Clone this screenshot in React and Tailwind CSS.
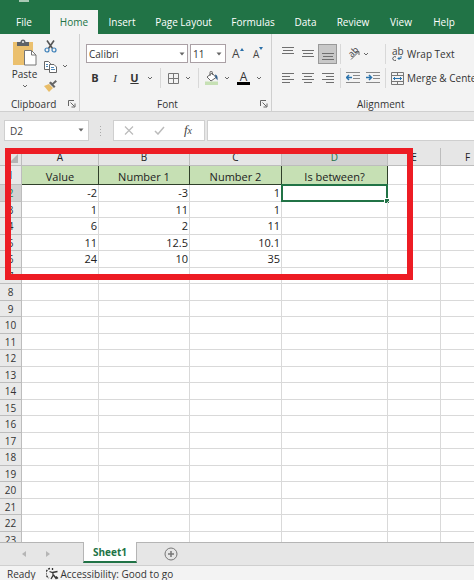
import React from 'react';

const TABS = [
  ['File', 'w-[48px]'],
  ['Home', 'ml-[2px] w-[48px] bg-[#f3f3f3] text-[#217346]'],
  ['Insert', 'w-[48px]'],
  ['Page Layout', 'w-[75px]'],
  ['Formulas', 'w-[64px]'],
  ['Data', 'w-[41px]'],
  ['Review', 'w-[54px]'],
  ['View', 'w-[42px]'],
  ['Help', 'w-[44px]'],
];

const COLUMNS = ['A', 'B', 'C', 'D', 'E', 'F'];
const TITLES = ['Value', 'Number 1', 'Number 2', 'Is between?'];
const DATA = [
  ['-2', '-3', '1'],
  ['1', '11', '1'],
  ['6', '2', '11'],
  ['11', '12.5', '10.1'],
  ['24', '10', '35'],
];
const ROWS = Array.from({ length: 22 }, (_, i) => i + 2);

function Chevron() {
  return (
    <svg width="6" height="6" viewBox="0 0 6 6" fill="none" stroke="#666" strokeWidth="1" className="shrink-0">
      <path d="M1 2l2 2 2-2" />
    </svg>
  );
}

function Caret({ className }) {
  return (
    <svg width="6" height="4" viewBox="0 0 6 4" className={className}>
      <path d="M0.500 0.500h5L3 3.500z" fill="#666" />
    </svg>
  );
}

function Launcher() {
  return (
    <button aria-label="More options" className="absolute right-[3px] bottom-[3px]">
      <svg width="8" height="8" viewBox="0 0 8 8" fill="none" stroke="#666" strokeWidth="1">
        <path d="M0.500 6V0.500H6M2.500 2.500l4 4M7 3.500V7H3.500" />
      </svg>
    </button>
  );
}

function Lines({ y, rows, align }) {
  return (
    <svg width="12" height="14" viewBox="0 0 12 14" stroke="#6f6f6f" strokeWidth="1">
      {rows.map((w, i) => {
        const x = align === 'right' ? 12 - w : align === 'center' ? (12 - w) / 2 : 0;
        return <path key={i} d={`M${x} ${y + i * 3}h${w}`} />;
      })}
    </svg>
  );
}

function Indent({ right }) {
  return (
    <svg width="14" height="12" viewBox="0 0 14 12" fill="none" stroke="#888" strokeWidth="1">
      <path d="M0 0.500h14M7 3.500h7M7 6.500h7M0 10.500h14" />
      <path d={right ? 'M0 5.500h5M3 3l2.500 2.500L3 8' : 'M6 5.500H1M3 3L0.500 5.500L3 8'} stroke="#2a73ad" strokeWidth="1.500" />
    </svg>
  );
}

function Tool({ label, className = '', children }) {
  return (
    <button aria-label={label} className={`flex h-[20px] shrink-0 items-center justify-center ${className}`}>
      {children}
    </button>
  );
}

function Divider({ className = '' }) {
  return <span className={`h-[20px] w-px shrink-0 bg-[#d8d8d8] ${className}`} />;
}

function Clipboard() {
  return (
    <section className="relative flex w-[80px] shrink-0 border-r border-[#cfcfcf] pt-[4px] pl-[11px]">
      <button className="flex h-[54px] w-[27px] flex-col items-center leading-[16px]">
        <svg width="25" height="28" viewBox="0 0 25 28" className="shrink-0">
          <path d="M1 4h20v23H1z" fill="#ebc06e" />
          <path d="M5 8V4h3.500a2.500 2.500 0 0 1 5 0H17v4z" fill="#5f6368" />
          <circle cx="11" cy="4" r="1" fill="#f3f3f3" />
          <path d="M12.500 12.500h7l4.500 4.500v10H12.500z" fill="#fff" stroke="#777" />
          <path d="M19.500 12.500V17H24" fill="none" stroke="#777" />
        </svg>
        <span>Paste</span>
        <span className="pt-px"><Chevron /></span>
      </button>
      <div className="ml-[5px] flex flex-col">
        <Tool label="Cut" className="w-[14px] pb-[3px]">
          <svg width="13" height="13" viewBox="0 0 13 13" fill="none">
            <path d="M3 0.500l5.500 8M10 0.500l-5.500 8" stroke="#555" strokeWidth="1.600" />
            <circle cx="3" cy="10" r="2" stroke="#3b7fb8" strokeWidth="1.200" />
            <circle cx="10" cy="10" r="2" stroke="#3b7fb8" strokeWidth="1.200" />
          </svg>
        </Tool>
        <Tool label="Copy" className="w-[14px] pb-[3px]">
          <svg width="13" height="12" viewBox="0 0 13 12" fill="#fff" stroke="#666">
            <path d="M0.500 0.500h4l2 2v6h-6z" />
            <path d="M5.500 3.500H10l2.500 2.500v5.500h-7z" />
            <path d="M2 3.500h2M2 5.500h2M7 6.500h3M7 8.500h4" stroke="#4d88b8" />
          </svg>
        </Tool>
        <Tool label="Format Painter" className="w-[14px] pb-[5px]">
          <svg width="13" height="12" viewBox="0 0 13 12">
            <path d="M0 6l5-2 4 4-4 4z" fill="#e9bd68" />
            <path d="M5 3l5 5 1.500-1.500L9.500 4.500 13 1.500 11.500 0 8.500 3 6.500 1.500z" fill="#666" />
          </svg>
        </Tool>
      </div>
      <button aria-label="Copy options" className="ml-[5px] flex h-[56px] items-center"><Chevron /></button>
      <h2 className="absolute bottom-0 left-[11px] leading-[14px]">Clipboard</h2>
      <Launcher />
    </section>
  );
}

function FontGroup() {
  return (
    <section className="relative w-[192px] shrink-0 border-r border-[#cfcfcf] pt-[10px] pl-[6px]">
      <div className="flex h-[19px] items-center">
        <label className="relative block">
          <select aria-label="Font" className="block h-[19px] w-[102px] appearance-none border border-[#aaa0a5] bg-white pl-[2px] text-[10px] leading-[16px]">
            <option>Calibri</option>
          </select>
          <Caret className="pointer-events-none absolute top-[8px] right-[3px]" />
        </label>
        <label className="relative ml-[2px] block">
          <select aria-label="Font size" className="block h-[19px] w-[36px] appearance-none border border-[#aaa0a5] bg-white pl-[2px] text-[10px] leading-[16px]">
            <option>11</option>
          </select>
          <Caret className="pointer-events-none absolute top-[8px] right-[4px]" />
        </label>
        <button className="ml-[6px] flex w-[12px] text-[12px] leading-[18px] text-[#444]">
          A
          <svg width="4" height="3" viewBox="0 0 4 3" className="mt-[3px] shrink-0"><path d="M0 3l2-3 2 3z" fill="#2a6fa8" /></svg>
        </button>
        <button className="ml-[9px] flex w-[12px] text-[10px] leading-[20px] text-[#444]">
          A
          <svg width="4" height="3" viewBox="0 0 4 3" className="mt-[3px] shrink-0"><path d="M0 0l2 3 2-3z" fill="#2a6fa8" /></svg>
        </button>
      </div>
      <div className="mt-[5px] flex h-[20px] items-center text-[11px] text-[#333]">
        <Tool label="Bold" className="w-[18px] font-bold">B</Tool>
        <Tool label="Italic" className="w-[22px] font-[Liberation_Serif,serif] italic">I</Tool>
        <Tool label="Underline" className="w-[17px] font-bold underline">U</Tool>
        <Tool label="Underline style" className="w-[14px]"><Chevron /></Tool>
        <Divider className="ml-[3px]" />
        <Tool label="Borders" className="ml-[5px] w-[14px]">
          <svg width="11" height="11" viewBox="0 0 11 11" fill="none" stroke="#777"><path d="M0.500 0.500h10v10h-10zM5.500 0v11M0 5.500h11" /></svg>
        </Tool>
        <Tool label="Border style" className="ml-[1px] w-[14px]"><Chevron /></Tool>
        <Divider className="ml-[3px]" />
        <Tool label="Fill color" className="ml-[6px] w-[14px]">
          <svg width="14" height="14" viewBox="0 0 14 14" fill="none">
            <path d="M0 10.500h13V14H0z" fill="#c6e0b4" />
            <path d="M2 6l5-4 4 4.500L6 10z" fill="#fff" stroke="#666" />
            <path d="M5 5V1.500a1.200 1.200 0 0 1 2.400 0V4" stroke="#666" />
            <path d="M10 3.500c2 0 3 2 2.500 6l-2-3z" fill="#2f5d8a" />
          </svg>
        </Tool>
        <Tool label="Fill color options" className="w-[16px]"><Chevron /></Tool>
        <button aria-label="Font color" className="ml-[1px] flex w-[15px] flex-col items-center text-[12px] leading-[10px] font-medium">
          <span className="h-[10px]">A</span>
          <span className="h-[3px] w-[13px] bg-black" />
        </button>
        <Tool label="Font color options" className="w-[15px]"><Chevron /></Tool>
      </div>
      <h2 className="absolute inset-x-0 bottom-0 pr-[16px] text-center leading-[14px]">Font</h2>
      <Launcher />
    </section>
  );
}

function Alignment() {
  return (
    <section className="relative min-w-0 flex-1 overflow-hidden pt-[10px] pl-[7px]">
      <div className="flex h-[20px] items-center">
        <Tool label="Top align" className="w-[18px]"><Lines y={0.5} rows={[12, 10, 12]} align="center" /></Tool>
        <Tool label="Middle align" className="ml-[2px] w-[18px]"><Lines y={3.5} rows={[12, 10, 12]} align="center" /></Tool>
        <Tool label="Bottom align" className="ml-[1px] w-[19px] border border-[#999] bg-[#c8c8c8]"><Lines y={6.5} rows={[12, 10, 12]} align="center" /></Tool>
        <Divider className="ml-[3px]" />
        <Tool label="Orientation" className="relative ml-[5px] w-[14px]">
          <span className="-mt-[5px] -rotate-45 text-[9px] leading-[10px] text-[#444]">ab</span>
          <svg width="14" height="14" viewBox="0 0 14 14" fill="none" stroke="#666" className="absolute top-[3px] left-0">
            <path d="M5 12.500l7.500-7.500M9.500 4.500h3.500V8" />
          </svg>
        </Tool>
        <Tool label="Orientation options" className="w-[12px]"><Chevron /></Tool>
        <Divider className="ml-[13px]" />
        <button className="ml-[6px] flex items-center whitespace-nowrap">
          <span className="mr-[4px] flex w-[11px] flex-col items-start leading-[9px] text-[#444]">
            ab
            <svg width="10" height="5" viewBox="0 0 10 5" fill="none" stroke="#555">
              <path d="M4 1a2 2 0 1 0 0 3.200" />
              <path d="M9 0v2.500H6M7.500 1L6 2.500 7.500 4" stroke="#2a73ad" />
            </svg>
          </span>
          Wrap Text
        </button>
      </div>
      <div className="mt-[4px] flex h-[20px] items-center">
        <Tool label="Align left" className="w-[18px]"><Lines y={2.5} rows={[12, 8, 12, 8]} /></Tool>
        <Tool label="Align center" className="ml-[2px] w-[18px]"><Lines y={2.5} rows={[12, 8, 12, 8]} align="center" /></Tool>
        <Tool label="Align right" className="ml-[2px] w-[18px]"><Lines y={2.5} rows={[12, 8, 12, 8]} align="right" /></Tool>
        <Divider className="ml-[3px]" />
        <Tool label="Decrease indent" className="ml-[5px] w-[14px]"><Indent /></Tool>
        <Tool label="Increase indent" className="ml-[6px] w-[14px]"><Indent right /></Tool>
        <Divider className="ml-[5px]" />
        <button className="ml-[5px] flex items-center whitespace-nowrap">
          <svg width="13" height="13" viewBox="0 0 13 13" fill="none" stroke="#777" className="mr-[3px] shrink-0">
            <path d="M0.500 0.500h12v12h-12zM0 3.500h13M0 9.500h13M6.500 0v3.500M6.500 9.500V13" />
            <path d="M2 6.500h9M4 5L2.500 6.500 4 8M9 5l1.500 1.500L9 8" stroke="#2a73ad" />
          </svg>
          Merge &amp; Center
        </button>
      </div>
      <h2 className="absolute bottom-0 left-[85px] leading-[14px]">Alignment</h2>
    </section>
  );
}

function FormulaBar() {
  return (
    <div className="flex h-[36px] shrink-0 items-start pt-[8px] pl-[4px]">
      <div className="relative">
        <input aria-label="Name box" defaultValue="D2" className="block h-[21px] w-[85px] border border-[#cfcfcf] bg-white pl-[5px] text-[10px] text-[#444]" />
        <Caret className="pointer-events-none absolute top-[8px] right-[5px]" />
      </div>
      <svg width="3" height="10" viewBox="0 0 3 10" className="mt-[6px] ml-[10px] shrink-0" fill="#aaa">
        <path d="M1 0h1v1H1zM1 3h1v1H1zM1 6h1v1H1zM1 9h1v1H1z" />
      </svg>
      <div className="ml-[11px] flex h-[21px] w-[92px] shrink-0 items-center border border-[#cfcfcf] bg-white">
        <Tool label="Cancel" className="w-[30px]">
          <svg width="10" height="9" viewBox="0 0 10 9" stroke="#bbb" strokeWidth="1.200"><path d="M1 0.500l8 8M9 0.500l-8 8" /></svg>
        </Tool>
        <Tool label="Enter" className="w-[30px]">
          <svg width="11" height="9" viewBox="0 0 11 9" fill="none" stroke="#bbb" strokeWidth="1.500"><path d="M1 5l3 3 6-7" /></svg>
        </Tool>
        <button aria-label="Insert function" className="w-[28px] font-[Liberation_Serif,serif] text-[13px] leading-[18px] text-[#444] italic">
          f<span className="text-[10px]">x</span>
        </button>
      </div>
      <input aria-label="Formula" className="ml-[2px] block h-[21px] min-w-0 flex-1 border border-r-0 border-[#cfcfcf] bg-white" />
    </div>
  );
}

function Sheet() {
  const head = 'border-r border-b border-[#bdbdbd] p-0 font-normal';
  return (
    <div className="relative min-h-0 flex-1 overflow-hidden bg-white">
      <table className="w-full table-fixed border-separate border-spacing-0 text-[11px] leading-[15px] font-medium text-[#222]">
        <colgroup>
          <col className="w-[22px]" />
          <col className="w-[77px]" />
          <col className="w-[91px]" />
          <col className="w-[92px]" />
          <col className="w-[106px]" />
          <col className="w-[53px]" />
          <col />
        </colgroup>
        <thead>
          <tr className="h-[18px] bg-[#e6e6e6] text-[10px] leading-[15px]">
            <th className={`${head} align-bottom`}>
              <svg width="9" height="9" viewBox="0 0 9 9" className="mb-[2px] ml-[9px] block"><path d="M9 0v9H0z" fill="#b4b4b4" /></svg>
            </th>
            {COLUMNS.map((c) => (
              <th key={c} scope="col" className={`${head} pt-[2px] ${c === 'D' ? 'bg-[#d2d2d2] text-[#217346]' : ''} ${c === 'F' ? 'border-r-0 pl-[20px]' : ''}`}>{c}</th>
            ))}
          </tr>
        </thead>
        <tbody>
          <tr className="h-[19px]">
            <th scope="row" className={`${head} bg-[#e9e9e9] text-[10px]`}>1</th>
            {TITLES.map((t) => (
              <td key={t} className="border-r border-b border-[#2f3f2a] bg-[#c6e0b4] p-0 pt-[2px] text-center">{t}</td>
            ))}
            <td className="border-r border-b border-[#d9d9d9] p-0" />
            <td className="border-b border-[#d9d9d9] p-0" />
          </tr>
          {ROWS.map((n) => (
            <tr key={n} className="odd:h-[16px] even:h-[17px]">
              <th scope="row" className={`${head} text-[10px] leading-[14px] text-[#333] ${n === 2 ? 'bg-[#d2d2d2] text-[#217346]' : 'bg-[#e9e9e9]'}`}>{n}</th>
              {COLUMNS.map((c, i) => (
                <td key={c} className={`relative border-b border-[#d9d9d9] p-0 pr-[1px] text-right leading-[14px] ${c === 'F' ? '' : 'border-r'}`}>
                  {DATA[n - 2]?.[i]}
                  {n === 2 && c === 'D' && (
                    <span className="absolute -top-[1px] -right-[1px] -bottom-[1px] -left-[1px] border-2 border-[#217346]">
                      <span className="absolute -right-[3px] -bottom-[3px] size-[5px] border-t border-l border-white bg-[#217346]" />
                    </span>
                  )}
                </td>
              ))}
            </tr>
          ))}
        </tbody>
      </table>
      <div className="pointer-events-none absolute top-0 left-[5px] h-[132px] w-[408px] border-[6px] border-[#ed1c24]" />
    </div>
  );
}

export default function App() {
  return (
    <div className="flex h-screen flex-col overflow-hidden bg-[#e6e6e6] font-['Open_Sans','Noto_Sans',sans-serif] text-[10px] text-[#333]">
      <header className="flex h-[34px] shrink-0 flex-col bg-[#217346]">
        <div className="h-[10px] pl-[19px]"><div className="h-[2px] w-[10px] bg-[#a9c9b5]" /></div>
        <nav className="flex h-[24px] text-white">
          {TABS.map(([name, cls]) => (
            <button key={name} className={`h-full shrink-0 whitespace-nowrap ${cls}`}>{name}</button>
          ))}
        </nav>
      </header>
      <div className="flex h-[78px] shrink-0 border-b border-[#cfcfcf] bg-[#f3f3f3]">
        <Clipboard />
        <FontGroup />
        <Alignment />
      </div>
      <FormulaBar />
      <Sheet />
      <div className="flex h-[23px] shrink-0 items-start border-t border-[#b5b5b5]">
        <button aria-label="Previous sheet" className="mt-[8px] ml-[22px]"><svg width="4" height="6" viewBox="0 0 4 6"><path d="M4 0v6L0 3z" fill="#b5b5b5" /></svg></button>
        <button aria-label="Next sheet" className="mt-[8px] ml-[20px]"><svg width="4" height="6" viewBox="0 0 4 6"><path d="M0 0v6l4-3z" fill="#b5b5b5" /></svg></button>
        <button className="-mt-px ml-[33px] h-[21px] w-[54px] border-x border-b-2 border-x-[#b5b5b5] border-b-[#217346] bg-white text-[10px] leading-[20px] font-bold text-[#217346]">Sheet1</button>
        <button aria-label="New sheet" className="mt-[4px] ml-[27px]">
          <svg width="14" height="14" viewBox="0 0 14 14" fill="none" stroke="#777"><circle cx="7" cy="7" r="6" /><path d="M7 4v6M4 7h6" strokeWidth="1.500" /></svg>
        </button>
      </div>
      <footer className="flex h-[15px] shrink-0 items-start overflow-hidden border-t border-[#cfcfcf] bg-[#f3f3f3] pt-px pl-[7px] leading-[14px] whitespace-nowrap">
        <span>Ready</span>
        <svg width="13" height="13" viewBox="0 0 13 13" fill="none" stroke="#333" className="mr-px ml-[11px] shrink-0">
          <path d="M4 1.500a5 5 0 0 0-1 9.500" strokeDasharray="2 1" strokeWidth="1.300" />
          <path d="M6.500 1v2M3.500 4.500l3 1 5-1M7 5.500v3l-2 3.500M7.500 8l3 4M10 9.500l2 2" strokeWidth="1.300" />
        </svg>
        <span>Accessibility: Good to go</span>
      </footer>
    </div>
  );
}
